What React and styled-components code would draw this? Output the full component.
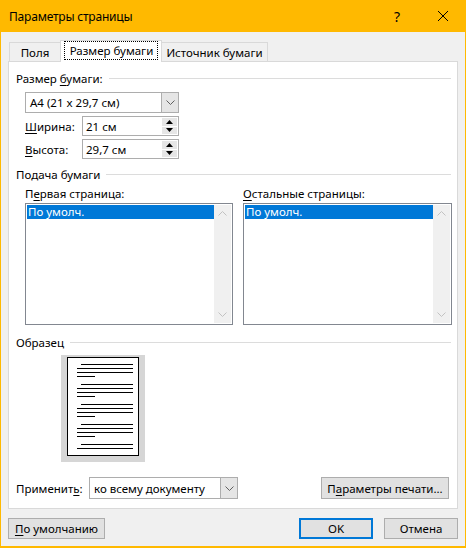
import styled, { createGlobalStyle } from "styled-components"

const GlobalStyle = createGlobalStyle`
  html, body { margin: 0; padding: 0; background: #f0f0f0; }
  body { font-family: "Segoe UI", "Noto Sans", sans-serif; font-size: 11.5px; color: #000; }
  * { box-sizing: border-box; }
`

const Window = styled.div`
  width: 466px;
  height: 548px;
  display: flex;
  flex-direction: column;
  background: #f0f0f0;
  border: 1px solid #ffb900;
  border-top: none;
  border-bottom-width: 2px;
`

const TitleBar = styled.div`
  height: 32px;
  flex: none;
  background: #ffb900;
  display: flex;
  align-items: center;
  padding-left: 9px;
  margin: 0 -1px;
  font-size: 12px;
`

const Title = styled.div`
  flex: 1;
  letter-spacing: -0.2px;
`

const TitleButton = styled.div`
  width: 46px;
  height: 32px;
  display: flex;
  align-items: center;
  justify-content: center;
  font-size: 14px;
`

const Body = styled.div`
  flex: 1;
  display: flex;
  flex-direction: column;
  padding: 7px 7px 0 7px;
`

const TabStrip = styled.div`
  display: flex;
  align-items: flex-end;
  height: 22px;
  padding-left: 1px;
`

const Tab = styled.div`
  flex: none;
  width: ${p => p.$w}px;
  height: ${p => (p.$active ? 22 : 19)}px;
  display: flex;
  align-items: center;
  justify-content: center;
  border: 1px solid #d9d9d9;
  border-bottom: none;
  background: ${p => (p.$active ? "#fff" : "#f0f0f0")};
  margin-bottom: ${p => (p.$active ? "-1px" : "0")};
  margin-left: ${p => (p.$active ? "-1px" : "0")};
  margin-right: ${p => (p.$active ? "-1px" : "0")};
  position: relative;
  z-index: ${p => (p.$active ? 1 : 0)};
  padding-bottom: ${p => (p.$active ? "2px" : "0")};
`

const FocusText = styled.span`
  outline: 1px dotted #000;
  outline-offset: 0;
  padding: 1px 4px 1px 5px;
`

const Panel = styled.div`
  height: 448px;
  background: #fff;
  border: 1px solid #d9d9d9;
  display: flex;
  flex-direction: column;
  padding: 8px 6px 0 7px;
`

const GroupHeader = styled.div`
  display: flex;
  align-items: center;
  height: 16px;
  margin-top: ${p => p.$top || 0}px;
  &::after {
    content: "";
    flex: 1;
    height: 1px;
    background: #dcdcdc;
    margin-left: 6px;
  }
`

const Indented = styled.div`
  padding-left: 9px;
  display: flex;
  flex-direction: column;
  align-items: flex-start;
`

const Combo = styled.div`
  flex: none;
  width: ${p => p.$w}px;
  height: ${p => p.$h}px;
  border: 1px solid #adadad;
  background: #fff;
  display: flex;
  align-items: stretch;
  margin-top: ${p => p.$top || 0}px;
`

const ComboText = styled.div`
  flex: 1;
  display: flex;
  align-items: center;
  padding-left: 4px;
`

const ComboArrow = styled.div`
  width: 17px;
  background: #e5e5e5;
  border-left: 1px solid #adadad;
  display: flex;
  align-items: center;
  justify-content: center;
`

const FieldRow = styled.div`
  display: flex;
  align-items: center;
  margin-top: 3px;
`

const FieldLabel = styled.div`
  flex: none;
  width: 57px;
`

const SpinBox = styled.div`
  flex: none;
  width: 97px;
  height: 20px;
  border: 1px solid #adadad;
  display: flex;
  padding: 1px;
`

const SpinText = styled.div`
  flex: 1;
  display: flex;
  align-items: center;
  padding-left: 2px;
`

const SpinButtons = styled.div`
  width: 15px;
  display: flex;
  flex-direction: column;
  gap: 1px;
  background: #fff;
`

const SpinButton = styled.div`
  flex: 1;
  background: #e6e6e6;
  display: flex;
  align-items: center;
  justify-content: center;
`

const Columns = styled.div`
  display: flex;
  gap: 10px;
  margin-top: 4px;
`

const Column = styled.div`
  width: ${p => p.$w}px;
  display: flex;
  flex-direction: column;
`

const ListLabel = styled.div`
  height: 16px;
  line-height: 16px;
  margin-bottom: 1px;
`

const ListBox = styled.div`
  height: 122px;
  border: 1px solid #828790;
  display: flex;
  padding: 1px;
`

const ListItems = styled.div`
  flex: 1;
`

const ListItem = styled.div`
  height: 14px;
  line-height: 14px;
  padding-left: 1px;
  background: ${p => (p.$selected ? "#0078d7" : "transparent")};
  color: ${p => (p.$selected ? "#fff" : "#000")};
`

const ScrollBar = styled.div`
  width: 17px;
  background: #f0f0f0;
  display: flex;
  flex-direction: column;
  justify-content: space-between;
  align-items: center;
  padding: 6px 0;
`

const PreviewFrame = styled.div`
  width: 84px;
  height: 107px;
  margin: 5px 0 0 45px;
  background: #d6d6d6;
  padding: 2px 6px 6px 6px;
`

const Page = styled.div`
  width: 72px;
  height: 99px;
  background: #fff;
  border: 1px solid #000;
`

const BottomRow = styled.div`
  display: flex;
  align-items: center;
  margin-top: 15px;
`

const ApplyLabel = styled.div`
  flex: none;
  width: 73px;
`

const Button = styled.div`
  flex: none;
  width: ${p => p.$w}px;
  height: ${p => p.$h || 21}px;
  background: #e1e1e1;
  border: ${p => (p.$default ? "2px solid #0078d7" : "1px solid #adadad")};
  display: flex;
  align-items: center;
  justify-content: center;
`

const Spacer = styled.div`
  flex: 1;
`

const Footer = styled.div`
  display: flex;
  align-items: center;
  margin-top: 9px;
  gap: 11px;
`

const Key = styled.span`
  text-decoration: underline;
  text-underline-offset: 2px;
`

function Chevron({ color = "#606060" }) {
  return (
    <svg width="9" height="5" viewBox="0 0 9 5">
      <path d="M0.5 0.5 L4.5 4.5 L8.5 0.5" fill="none" stroke={color} strokeWidth="1" />
    </svg>
  )
}

function Triangle({ up }) {
  return (
    <svg width="7" height="4" viewBox="0 0 7 4">
      <path d={up ? "M3.5 0 L7 4 L0 4 Z" : "M0 0 L7 0 L3.5 4 Z"} fill="#000" />
    </svg>
  )
}

function Spin({ value }) {
  return (
    <SpinBox>
      <SpinText>{value}</SpinText>
      <SpinButtons>
        <SpinButton><Triangle up /></SpinButton>
        <SpinButton><Triangle /></SpinButton>
      </SpinButtons>
    </SpinBox>
  )
}

function PaperList() {
  return (
    <ListBox>
      <ListItems>
        <ListItem $selected>По умолч.</ListItem>
      </ListItems>
      <ScrollBar>
        <svg width="9" height="5" viewBox="0 0 9 5">
          <path d="M0.5 4.5 L4.5 0.5 L8.5 4.5" fill="none" stroke="#c2c2c2" />
        </svg>
        <Chevron color="#c2c2c2" />
      </ScrollBar>
    </ListBox>
  )
}

// thumbnail of a page: five paragraphs, first line indented, last line short
function PageThumb() {
  const paragraphs = [0, 1, 2, 3, 4]
  return (
    <Page>
      <svg width="70" height="97" viewBox="0 0 70 97">
        {paragraphs.map(i => {
          const y = 6.5 + i * 20
          const last = i === 4
          return (
            <g key={i} stroke="#000" strokeWidth="1">
              <line x1="13" x2="65" y1={y} y2={y} />
              <line x1="9" x2="65" y1={y + 4} y2={y + 4} />
              {!last && <line x1="9" x2="65" y1={y + 8} y2={y + 8} />}
              {!last && <line x1="9" x2="27" y1={y + 12} y2={y + 12} />}
            </g>
          )
        })}
      </svg>
    </Page>
  )
}

export default function App() {
  return (
    <>
      <GlobalStyle />
      <Window>
        <TitleBar>
          <Title>Параметры страницы</Title>
          <TitleButton>?</TitleButton>
          <TitleButton>
            <svg width="10" height="10" viewBox="0 0 10 10">
              <path d="M0 0 L10 10 M10 0 L0 10" stroke="#000" strokeWidth="1" />
            </svg>
          </TitleButton>
        </TitleBar>
        <Body>
          <TabStrip>
            <Tab $w={52}>Поля</Tab>
            <Tab $w={102} $active><FocusText>Размер бумаги</FocusText></Tab>
            <Tab $w={107}>Источник бумаги</Tab>
          </TabStrip>
          <Panel>
            <GroupHeader><span>Размер <Key>б</Key>умаги:</span></GroupHeader>
            <Indented>
              <Combo $w={154} $h={21} $top={6}>
                <ComboText>A4 (21 x 29,7 см)</ComboText>
                <ComboArrow><Chevron /></ComboArrow>
              </Combo>
              <FieldRow>
                <FieldLabel><Key>Ш</Key>ирина:</FieldLabel>
                <Spin value="21 см" />
              </FieldRow>
              <FieldRow>
                <FieldLabel><Key>В</Key>ысота:</FieldLabel>
                <Spin value="29,7 см" />
              </FieldRow>
            </Indented>
            <GroupHeader $top={7}><span>Подача бумаги</span></GroupHeader>
            <Indented>
              <Columns>
                <Column $w={208}>
                  <ListLabel>П<Key>е</Key>рвая страница:</ListLabel>
                  <PaperList />
                </Column>
                <Column $w={209}>
                  <ListLabel><Key>О</Key>стальные страницы:</ListLabel>
                  <PaperList />
                </Column>
              </Columns>
            </Indented>
            <GroupHeader $top={9}><span>Образец</span></GroupHeader>
            <PreviewFrame>
              <PageThumb />
            </PreviewFrame>
            <BottomRow>
              <ApplyLabel>Применит<Key>ь</Key>:</ApplyLabel>
              <Combo $w={149} $h={22}>
                <ComboText>ко всему документу</ComboText>
                <ComboArrow><Chevron /></ComboArrow>
              </Combo>
              <Spacer />
              <Button $w={128} $h={22}>П<Key>а</Key>раметры печати...</Button>
              <Spacer style={{ flex: "0 0 2px" }} />
            </BottomRow>
          </Panel>
          <Footer>
            <Button $w={97}><Key>П</Key>о умолчанию</Button>
            <Spacer />
            <Button $w={74} $default>OK</Button>
            <Button $w={74}>Отмена</Button>
          </Footer>
        </Body>
      </Window>
    </>
  )
}
